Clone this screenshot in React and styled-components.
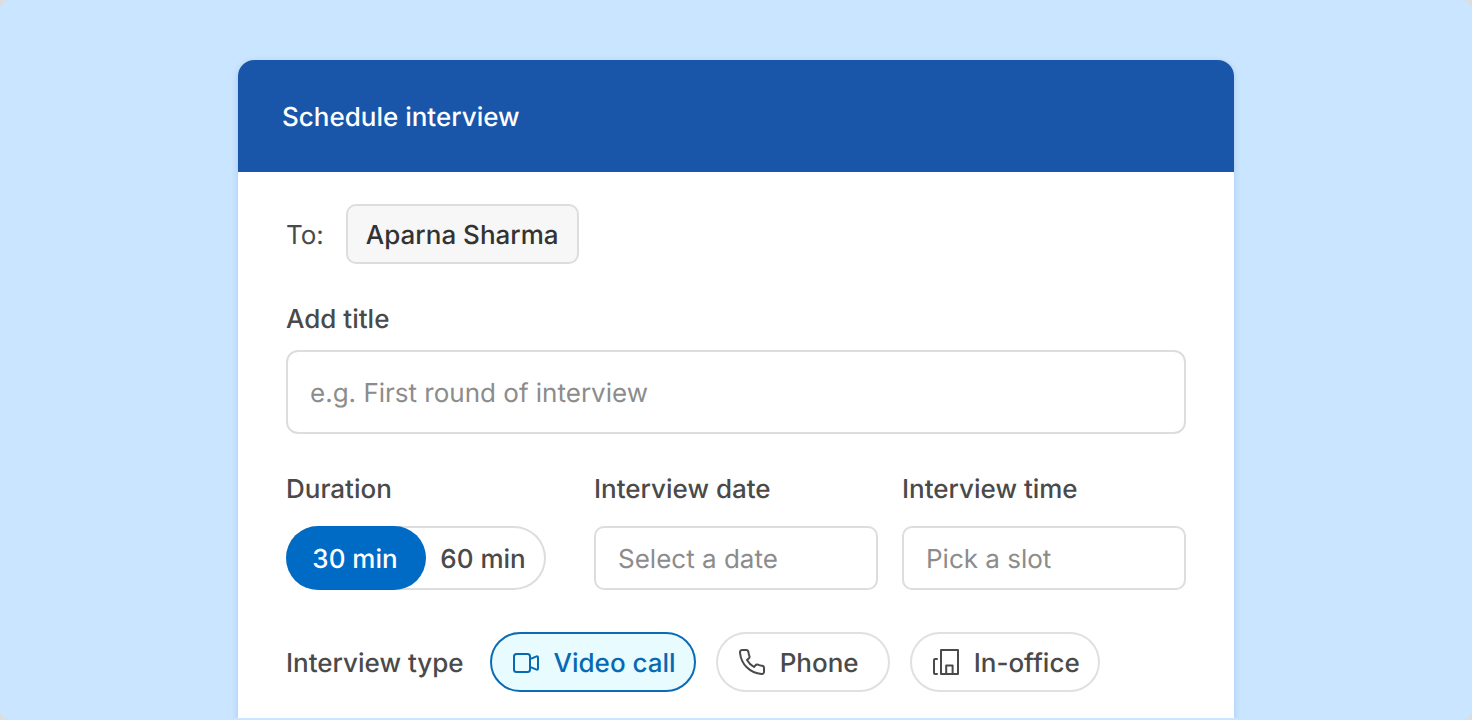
import React, { useState } from "react";
import styled, { createGlobalStyle } from "styled-components";

const GlobalStyle = createGlobalStyle`
  *, *::before, *::after { box-sizing: border-box; }
  html { background: #dddddd; }
  body {
    margin: 0;
    font-family: Inter, "Liberation Sans", sans-serif;
    font-size: 26px;
    line-height: 32px;
    color: #4a4a4a;
    text-rendering: geometricPrecision;
  }
`;

const Page = styled.main`
  min-height: 100vh;
  padding: 60px 24px 2px;
  border-radius: 10px;
  background: #c9e5ff;
`;

const Card = styled.form`
  max-width: 996px;
  margin: 0 auto;
  border-radius: 16px 16px 0 0;
  background: #ffffff;
  box-shadow: 0 2px 6px rgba(24, 87, 170, 0.2);
  clip-path: inset(-10px -10px 0 -10px);
`;

const Header = styled.header`
  display: flex;
  align-items: center;
  min-height: 112px;
  padding: 4px 44px 0;
  border-radius: 16px 16px 0 0;
  background: #1956a9;
`;

const Title = styled.h1`
  margin: 0;
  font-size: 26px;
  font-weight: 500;
  color: #ffffff;
`;

const Body = styled.div`
  display: flex;
  flex-direction: column;
  gap: 40px;
  padding: 32px 48px 26px;
`;

const Recipient = styled.div`
  display: flex;
  align-items: center;
  gap: 22px;
`;

const Text = styled.span`
  padding-top: 4px;
`;

const Person = styled.button`
  height: 60px;
  padding: 4px 18px 0;
  border: 2px solid #dddddd;
  border-radius: 10px;
  background: #f7f7f7;
  font: inherit;
  font-weight: 500;
  color: #333333;
  text-rendering: inherit;
`;

const Columns = styled.div`
  display: grid;
  grid-template-columns: repeat(3, 1fr);
  gap: 24px;
`;

const Field = styled.div`
  display: flex;
  flex-direction: column;
  gap: ${({ $gap }) => $gap};
  min-width: 0;
`;

const Label = styled.label`
  font-weight: 500;
`;

const GroupLabel = styled.span`
  font-weight: 500;
`;

const TextBox = styled.input`
  width: 100%;
  height: ${({ $tall }) => ($tall ? "84px" : "64px")};
  padding: 2px 22px 0;
  border: 2px solid #dddddd;
  border-radius: ${({ $tall }) => ($tall ? "12px" : "10px")};
  background: #ffffff;
  font: inherit;
  color: #333333;
  text-rendering: inherit;
  &::placeholder { color: #8c8c8c; opacity: 1; }
`;

const HiddenRadio = styled.input`
  position: absolute;
  opacity: 0;
  pointer-events: none;
`;

const Toggle = styled.div`
  display: flex;
  align-self: flex-start;
  width: 260px;
  height: 64px;
  border-radius: 32px;
  box-shadow: inset 0 0 0 2px #dddddd;
`;

const ToggleOption = styled.label`
  display: flex;
  align-items: center;
  justify-content: center;
  position: relative;
  flex: ${({ $on }) => ($on ? "0 0 140px" : "1")};
  padding-right: ${({ $on }) => ($on ? "2px" : "6px")};
  border-radius: 32px;
  background: ${({ $on }) => ($on ? "#006bc5" : "transparent")};
  color: ${({ $on }) => ($on ? "#ffffff" : "inherit")};
  font-weight: 500;
`;

const TypeRow = styled.div`
  display: flex;
  flex-wrap: wrap;
  align-items: center;
  gap: 20px;
  padding-top: 2px;
`;

const TypeLabel = styled(GroupLabel)`
  margin-right: 6px;
  padding-top: 4px;
`;

const Chip = styled.label`
  display: flex;
  align-items: center;
  gap: 14px;
  position: relative;
  min-width: 174px;
  height: 60px;
  padding: 0 18px 0 20px;
  border: 2px solid ${({ $on }) => ($on ? "#0b6cb5" : "#e0e0e0")};
  border-radius: 30px;
  background: ${({ $on }) => ($on ? "#e8fbff" : "#ffffff")};
  color: ${({ $on }) => ($on ? "#0669b3" : "inherit")};
  font-weight: 500;

  svg { flex: none; }
`;

const iconProps = {
  width: 28,
  height: 28,
  viewBox: "0 0 28 28",
  fill: "none",
  stroke: "currentColor",
  strokeWidth: 2,
  strokeLinejoin: "round",
  strokeLinecap: "round",
  "aria-hidden": true,
};

const VideoIcon = () => (
  <svg {...iconProps}>
    <rect x="2" y="6" width="16" height="18" rx="2.5" />
    <path d="M18 11.2 L24.6 8.4 Q26 8 26 9.4 V20.6 Q26 22 24.6 21.6 L18 18.8" />
  </svg>
);

const PhoneIcon = () => (
  <svg {...iconProps}>
    <path d="M4.2 2 H8.2 C9.6 2 10.2 2.8 10.4 4 C10.6 5.6 10.9 6.9 11.4 8.2 C11.8 9.2 11.4 10 10.6 10.6 L9 12 C10.6 14.8 13.2 17.4 16 19 L17.4 17.4 C18 16.6 18.8 16.4 19.8 16.6 C21.1 17.1 22.6 17.5 24 17.7 C25.4 17.9 26 18.6 26 19.8 V23.8 C26 25.2 25 26 23.6 25.9 C11.8 25.2 3 16.2 2 4.5 C1.9 3 2.8 2 4.2 2 Z" />
  </svg>
);

const OfficeIcon = () => (
  <svg {...iconProps}>
    <path d="M9 2 H26 V26 H9 Z" />
    <path d="M14.2 26 V17.4 H20.6 V26" />
    <path d="M5 11 H3 Q2 11 2 12 V25 Q2 26 3 26 H5" />
  </svg>
);

const durations = ["30 min", "60 min"];
const types = [
  { name: "Video call", Icon: VideoIcon },
  { name: "Phone", Icon: PhoneIcon },
  { name: "In-office", Icon: OfficeIcon },
];

export default function App() {
  const [duration, setDuration] = useState("30 min");
  const [type, setType] = useState("Video call");

  return (
    <>
      <GlobalStyle />
      <Page>
        <Card>
          <Header>
            <Title>Schedule interview</Title>
          </Header>
          <Body>
            <Recipient>
              <Text>To:</Text>
              <Person type="button">Aparna Sharma</Person>
            </Recipient>
            <Field $gap="14px">
              <Label htmlFor="title">Add title</Label>
              <TextBox id="title" $tall placeholder="e.g. First round of interview" />
            </Field>
            <Columns>
              <Field $gap="20px">
                <GroupLabel id="duration">Duration</GroupLabel>
                <Toggle role="radiogroup" aria-labelledby="duration">
                  {durations.map((d) => (
                    <ToggleOption key={d} $on={d === duration}>
                      <HiddenRadio
                        type="radio"
                        name="duration"
                        checked={d === duration}
                        onChange={() => setDuration(d)}
                      />
                      <Text>{d}</Text>
                    </ToggleOption>
                  ))}
                </Toggle>
              </Field>
              <Field $gap="20px">
                <Label htmlFor="date">Interview date</Label>
                <TextBox id="date" placeholder="Select a date" />
              </Field>
              <Field $gap="20px">
                <Label htmlFor="time">Interview time</Label>
                <TextBox id="time" placeholder="Pick a slot" />
              </Field>
            </Columns>
            <TypeRow role="radiogroup" aria-labelledby="type">
              <TypeLabel id="type">Interview type</TypeLabel>
              {types.map(({ name, Icon }) => (
                <Chip key={name} $on={name === type}>
                  <HiddenRadio
                    type="radio"
                    name="type"
                    checked={name === type}
                    onChange={() => setType(name)}
                  />
                  <Icon />
                  <Text>{name}</Text>
                </Chip>
              ))}
            </TypeRow>
          </Body>
        </Card>
      </Page>
    </>
  );
}
